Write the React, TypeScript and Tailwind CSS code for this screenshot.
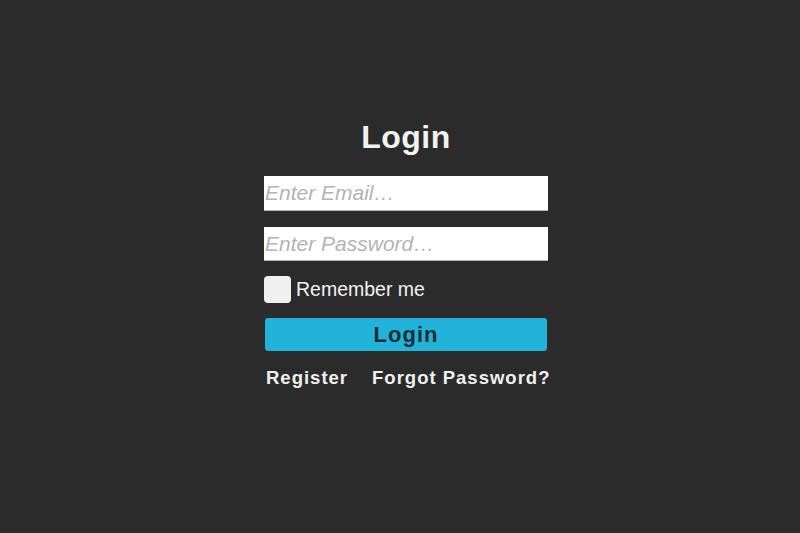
import React from "react";

export default function App() {
  return (
    <div
      className="min-h-[533px] w-full bg-[#2b2b2b] flex flex-col items-center pt-[121px]"
      style={{ fontFamily: '"Liberation Sans", Arial, sans-serif' }}
    >
      <div className="w-[284px] ml-[12px] flex flex-col">
        <h1 className="text-[32px] leading-[32px] font-bold tracking-[0.5px] text-[#f2f2f2] text-center">
          Login
        </h1>
        <input
          type="email"
          placeholder="Enter Email…"
          className="mt-[23px] h-[35px] w-full bg-white border-b border-[#b5b5b5] pl-[1px] text-[21px] italic text-[#555] placeholder:text-[#b3b3b3] outline-none"
        />
        <input
          type="password"
          placeholder="Enter Password…"
          className="mt-[16px] h-[34px] w-full bg-white border-b border-[#b5b5b5] pl-[1px] text-[21px] italic text-[#555] placeholder:text-[#b3b3b3] outline-none"
        />
        <label className="mt-[15px] h-[27px] flex items-center gap-[5px]">
          <span className="w-[27px] h-[27px] rounded-[4px] bg-[#f0f0f0] shrink-0" />
          <span className="text-[19.5px] leading-none text-[#f2f2f2]">Remember me</span>
        </label>
        <button className="mt-[15px] ml-[1px] w-[282px] h-[33px] rounded-[3px] bg-[#22b3d9] text-[22px] leading-none font-bold tracking-[1px] text-[#1f2d36]">
          Login
        </button>
        <div className="mt-[18px] ml-[2px] flex items-center gap-[24px] text-[18.5px] leading-[18px] font-bold tracking-[1px] text-[#f0f0f0] whitespace-nowrap">
          <span>Register</span>
          <span>Forgot Password?</span>
        </div>
      </div>
    </div>
  );
}
